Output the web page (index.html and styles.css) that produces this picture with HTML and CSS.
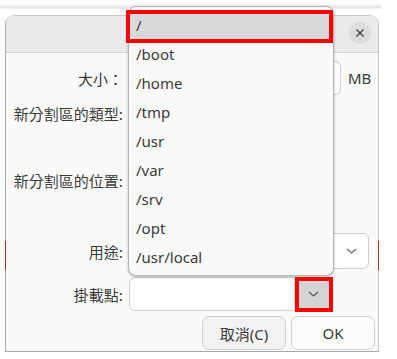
FILE: index.html
```html
<!DOCTYPE html>
<html lang="zh-Hant">
<head>
	<meta charset="UTF-8" />
	<title>新增分割區</title>
	<link rel="stylesheet" href="styles.css">
</head>
<body>
	<div class="screen">
		<div class="back-shadow"></div>
		<div class="dialog">
			<div class="headerbar">
				<button class="close-btn" aria-label="close">
					<svg width="10" height="10" viewBox="0 0 10 10"><path d="M1.5 1.5 L8.5 8.5 M8.5 1.5 L1.5 8.5" stroke="#3a3a3a" stroke-width="1.3" fill="none"/></svg>
				</button>
			</div>
			<div class="form">
				<div class="row row-size">
					<label class="lbl">大小：</label>
					<div class="field">
						<div class="entry size-entry"></div>
						<span class="unit">MB</span>
					</div>
				</div>
				<div class="row row-type">
					<label class="lbl">新分割區的類型:</label>
					<div class="field"></div>
				</div>
				<div class="row row-place">
					<label class="lbl">新分割區的位置:</label>
					<div class="field"></div>
				</div>
				<div class="row row-use">
					<label class="lbl">用途:</label>
					<div class="field">
						<div class="combo use-combo">
							<span class="combo-text"></span>
							<span class="chev">
								<svg width="11" height="6" viewBox="0 0 11 6"><path d="M1 1 L5.5 5 L10 1" stroke="#666" stroke-width="1.2" fill="none"/></svg>
							</span>
						</div>
					</div>
				</div>
				<div class="row row-mount">
					<label class="lbl">掛載點:</label>
					<div class="field">
						<div class="combo mount-combo">
							<span class="combo-text"></span>
							<span class="chev drop-btn">
								<svg width="11" height="6" viewBox="0 0 11 6"><path d="M1 1 L5.5 5 L10 1" stroke="#555" stroke-width="1.2" fill="none"/></svg>
							</span>
						</div>
					</div>
				</div>
				<div class="actions">
					<button class="btn btn-cancel">取消(C)</button>
					<button class="btn btn-ok">OK</button>
				</div>
			</div>
			<span class="edge edge-left"></span>
			<span class="edge edge-right"></span>
		</div>

		<ul class="popup">
			<li class="item selected">/</li>
			<li class="item">/boot</li>
			<li class="item">/home</li>
			<li class="item">/tmp</li>
			<li class="item">/usr</li>
			<li class="item">/var</li>
			<li class="item">/srv</li>
			<li class="item">/opt</li>
			<li class="item">/usr/local</li>
		</ul>

		<div class="mark mark-item"></div>
		<div class="mark mark-btn"></div>
	</div>
</body>
</html>
```

FILE: styles.css
```css
* {
	box-sizing: border-box;
}

body {
	margin: 0;
	background-color: #ffffff;
	color: #3d3d3d;
	font-family: "Noto Sans", "Noto Sans CJK TC", sans-serif;
	font-size: 15px;
}

.screen {
	position: relative;
	width: 397px;
	height: 359px;
	overflow: hidden;
	padding-top: 15px;
	padding-left: 5px;
}

/* faint shadow of the window behind */
.back-shadow {
	position: absolute;
	left: 0;
	top: 4px;
	width: 382px;
	height: 5px;
	background: linear-gradient(#ffffff, #e4e4e4 60%, #f4f4f4);
}

.dialog {
	position: relative;
	width: 374px;
	height: 337px;
	background-color: #fafafa;
	border: 1px solid #a8a8a8;
	border-top-color: #c8c8c8;
	border-right-color: #c4c4c4;
	border-radius: 9px 9px 0 0;
}

.headerbar {
	height: 37px;
	background-color: #ebebeb;
	border-bottom: 1px solid #d2d2d2;
	border-radius: 8px 8px 0 0;
	display: flex;
	justify-content: flex-end;
	align-items: center;
	padding-right: 7px;
	padding-bottom: 2px;
}

.close-btn {
	width: 22px;
	height: 22px;
	border: none;
	border-radius: 50%;
	background-color: #dcdcdc;
	display: flex;
	align-items: center;
	justify-content: center;
	padding: 0;
}

.form {
	padding-top: 8px;
	display: flex;
	flex-direction: column;
}

.row {
	display: flex;
	align-items: center;
}

.lbl {
	width: 117px;
	text-align: right;
	font-family: "Noto Sans CJK TC", sans-serif;
	font-size: 15px;
	color: #3a3a3a;
	white-space: nowrap;
}

.field {
	margin-left: 6px;
	display: flex;
	align-items: center;
}

.row-size {
	height: 34px;
}

.row-type {
	height: 36px;
}

.row-place {
	height: 98px;
}

.row-use {
	height: 36px;
	margin-top: 4px;
}

.row-mount {
	height: 34px;
	margin-top: 8px;
}

.entry {
	height: 34px;
	background-color: #ffffff;
	border: 1px solid #cdcdcd;
	border-radius: 6px;
}

.size-entry {
	width: 212px;
}

.unit {
	margin-left: 7px;
	font-size: 15px;
	color: #3a3a3a;
}

.combo {
	display: flex;
	align-items: stretch;
	background-color: #ffffff;
	border: 1px solid #cdcdcd;
	border-radius: 6px;
	overflow: hidden;
}

.combo-text {
	flex: 1;
}

.chev {
	width: 34px;
	display: flex;
	align-items: center;
	justify-content: center;
}

.use-combo {
	width: 240px;
	height: 36px;
}

.mount-combo {
	width: 204px;
	height: 34px;
}

.drop-btn {
	width: 38px;
	background-color: #d4d4d4;
}

.actions {
	margin-top: 5px;
	display: flex;
	justify-content: flex-end;
	gap: 5px;
	padding-right: 3px;
}

.btn {
	width: 84px;
	height: 34px;
	border: 1px solid #cfcfcf;
	border-radius: 7px;
	font-family: "Noto Sans", "Noto Sans CJK TC", sans-serif;
	font-size: 15px;
	color: #3a3a3a;
}

.btn-cancel {
	background-color: #f2f2f2;
}

.btn-ok {
	background-color: #fcfcfc;
}

/* bits of the window behind that show through the border */
.edge {
	position: absolute;
	top: 225px;
	width: 1px;
	height: 29px;
	background-color: #9a3416;
}

.edge-left {
	left: -1px;
}

.edge-right {
	right: -1px;
}

.popup {
	position: absolute;
	left: 128px;
	top: 6px;
	width: 206px;
	height: 270px;
	margin: 0;
	padding: 4px 0 0;
	list-style: none;
	background-color: #fafafa;
	border: 1px solid #b4b4b4;
	border-radius: 8px;
	box-shadow: 0 1px 3px rgba(0, 0, 0, 0.25);
}

.item {
	height: 29px;
	line-height: 29px;
	padding-left: 7px;
	font-family: "Noto Sans", sans-serif;
	font-size: 15px;
	color: #3a3a3a;
}

.item.selected {
	background-color: #dadada;
	margin: 0 1px;
	padding-left: 6px;
}

.mark {
	position: absolute;
	border: 4px solid #ff0000;
}

.mark-item {
	left: 126px;
	top: 10px;
	width: 207px;
	height: 33px;
}

.mark-btn {
	left: 295px;
	top: 277px;
	width: 38px;
	height: 35px;
}
```
